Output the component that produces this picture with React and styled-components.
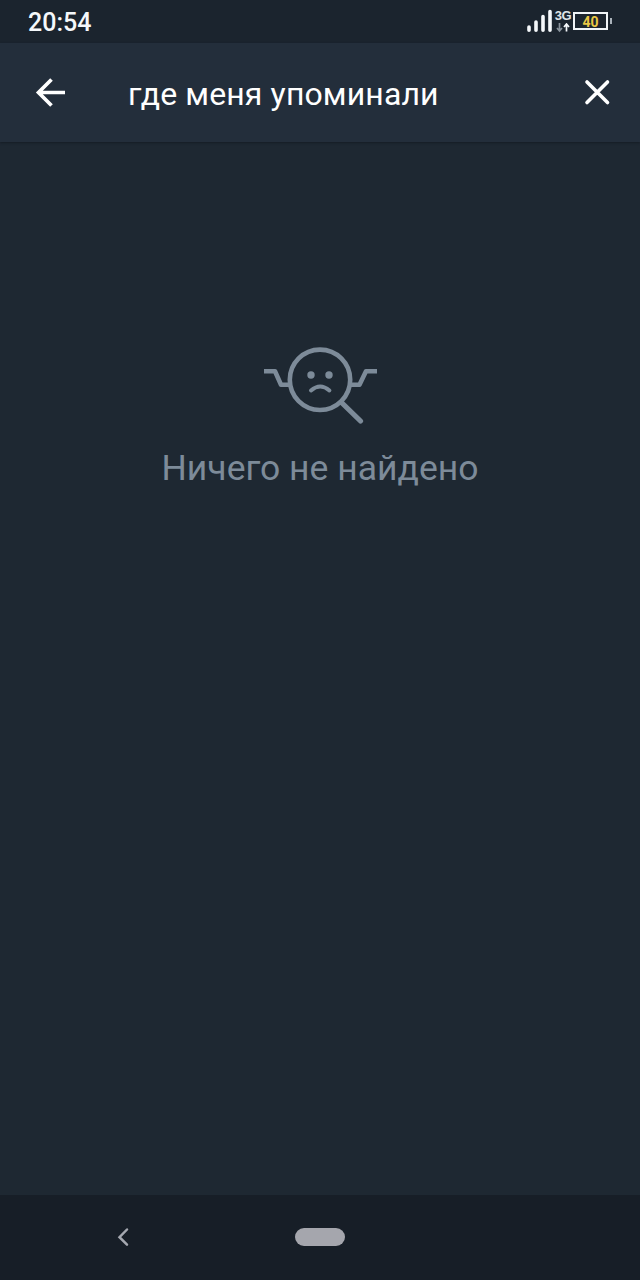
import React from 'react';
import styled, { createGlobalStyle } from 'styled-components';

const GlobalStyle = createGlobalStyle`
  * { box-sizing: border-box; }
  body { margin: 0; background: #1e2832; font-family: Roboto, "Liberation Sans", sans-serif; }
`;

const Screen = styled.div`
  display: flex;
  flex-direction: column;
  width: 640px;
  height: 1280px;
  overflow: hidden;
  background: #1e2832;
`;

const StatusBar = styled.header`
  display: flex;
  align-items: flex-start;
  justify-content: space-between;
  height: 43px;
  padding: 0 28px;
  background: #1b242e;
  color: #f5f8fb;
`;

const Clock = styled.time`
  padding-top: 8px;
  font-size: 25px;
  line-height: 29px;
  font-weight: 500;
`;

const StatusIcons = styled.div`
  display: flex;
  align-items: flex-start;
  padding-top: 9px;
`;

const Network = styled.div`
  display: flex;
  flex-direction: column;
  align-items: center;
  width: 18px;
  margin: 0 1px;
  padding-top: 1px;
  gap: 2px;
`;

const NetworkLabel = styled.span`
  color: #dfe4e8;
  font: 700 13px/11px "Liberation Sans", sans-serif;
  letter-spacing: -0.5px;
`;

const Battery = styled.div`
  display: flex;
  align-items: center;
  gap: 2px;
  margin-top: 3px;

  &::after {
    content: "";
    width: 2px;
    height: 6px;
    background: #aab2ba;
  }
`;

const BatteryLevel = styled.span`
  width: 35px;
  height: 18px;
  border: 2px solid #f0f4f7;
  color: #e9c744;
  font-size: 14px;
  line-height: 16px;
  font-weight: 700;
  text-align: center;
`;

const SearchBar = styled.div`
  display: flex;
  align-items: center;
  height: 99px;
  padding: 0 27px 0 34px;
  background: #232e3b;
  box-shadow: 0 1px 2px rgba(15, 21, 29, 0.6);
  color: #fff;
`;

const IconButton = styled.button`
  display: flex;
  padding: 0;
  border: 0;
  background: none;
  color: inherit;
`;

const Query = styled.div`
  flex: 1;
  padding: 2px 0 0 61px;
  font-size: 32px;
  line-height: 40px;
  letter-spacing: 0.13px;
  white-space: nowrap;
`;

const EmptyState = styled.main`
  display: flex;
  flex: 1;
  flex-direction: column;
  align-items: center;
  padding-top: 200px;
  color: #7d8b99;
`;

const EmptyText = styled.p`
  margin: 22px 0 0;
  font-size: 35.5px;
  line-height: 44px;
  white-space: nowrap;
`;

const NavigationBar = styled.nav`
  display: flex;
  align-items: center;
  height: 85px;
  padding: 0 0 2px 115px;
  gap: 164px;
  background: #171e27;
  color: #a5a8b0;
`;

const HomePill = styled.span`
  width: 50px;
  height: 18px;
  border-radius: 9px;
  background: #a5a6ad;
`;

const SignalIcon = () => (
  <svg width="26" height="24" viewBox="0 0 26 24" fill="none" stroke="currentColor" strokeWidth="3.6" strokeLinecap="round">
    <path d="M2 18v3.2M9 13v8.2M16 7.5v13.7M23 2.5v18.7" />
  </svg>
);

const TrafficIcon = () => (
  <svg width="16" height="10" viewBox="0 0 16 10" fill="none" strokeWidth="1.7">
    <path d="M4.5 0v8M2 5l2.5 3L7 5" stroke="#89929b" />
    <path d="M11.5 8.5V.8M9 4l2.5-3L14 4" stroke="currentColor" />
  </svg>
);

const BackIcon = () => (
  <svg width="33" height="32" viewBox="0 0 33 32" fill="none" stroke="currentColor" strokeWidth="3.7">
    <path d="M31 15.5H4M17.5 2.5l-13 13 13 13" />
  </svg>
);

const ClearIcon = () => (
  <svg width="30" height="30" viewBox="0 0 30 30" fill="none" stroke="currentColor" strokeWidth="3.6" strokeLinecap="round">
    <path d="M4 4L24.5 24.5M24.5 4L4 24.5" />
  </svg>
);

const NothingFoundIcon = () => (
  <svg width="116" height="82" viewBox="0 0 116 82" fill="none" stroke="currentColor" strokeWidth="4.6">
    <circle cx="58" cy="37.8" r="30.2" />
    <path d="M2 29.3h11L19 42.7h9M115 29.3h-11L97.5 42.7H88" strokeLinejoin="round" />
    <path d="M79.5 60.5L98.5 79" strokeWidth="5.2" strokeLinecap="round" />
    <path d="M49 48.5q9.2-8 18.4 0" strokeWidth="4" strokeLinecap="round" />
    <circle cx="49" cy="33" r="3.7" fill="currentColor" stroke="none" />
    <circle cx="67" cy="33" r="3.7" fill="currentColor" stroke="none" />
  </svg>
);

const NavBackIcon = () => (
  <svg width="16" height="20" viewBox="0 0 16 20" fill="none" stroke="currentColor" strokeWidth="2.5" strokeLinecap="round">
    <path d="M12 2.5L4.5 10.2l7.5 7.5" />
  </svg>
);

export default function App() {
  return (
    <>
      <GlobalStyle />
      <Screen>
        <StatusBar>
          <Clock>20:54</Clock>
          <StatusIcons>
            <SignalIcon />
            <Network>
              <NetworkLabel>3G</NetworkLabel>
              <TrafficIcon />
            </Network>
            <Battery>
              <BatteryLevel>40</BatteryLevel>
            </Battery>
          </StatusIcons>
        </StatusBar>
        <SearchBar>
          <IconButton aria-label="Назад"><BackIcon /></IconButton>
          <Query>где меня упоминали</Query>
          <IconButton aria-label="Очистить"><ClearIcon /></IconButton>
        </SearchBar>
        <EmptyState>
          <NothingFoundIcon />
          <EmptyText>Ничего не найдено</EmptyText>
        </EmptyState>
        <NavigationBar>
          <NavBackIcon />
          <HomePill />
        </NavigationBar>
      </Screen>
    </>
  );
}
